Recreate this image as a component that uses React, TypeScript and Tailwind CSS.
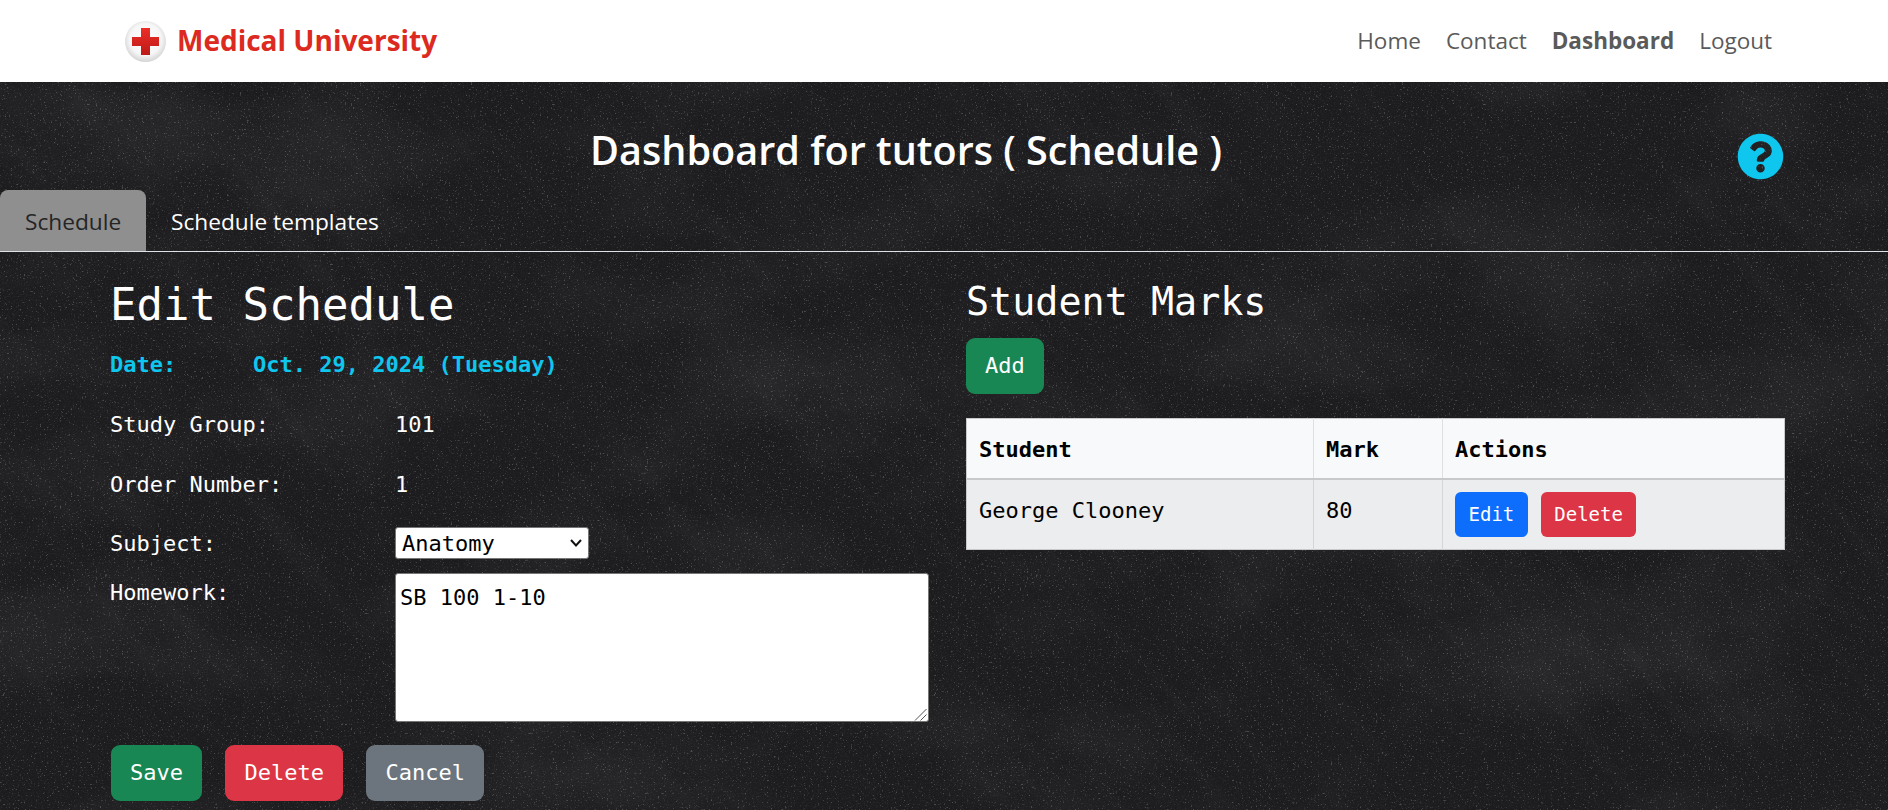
import { FaQuestionCircle } from "react-icons/fa";

const mono = "font-['DejaVu_Sans_Mono','Liberation_Mono',monospace]";
const sans = "font-['Open_Sans','Noto_Sans',sans-serif]";

function ChalkTexture() {
  return (
    <svg className="absolute inset-0 h-full w-full" aria-hidden="true">
      <defs>
        <filter id="patches" x="0" y="0" width="100%" height="100%">
          <feTurbulence type="fractalNoise" baseFrequency="0.005 0.008" numOctaves="4" seed="8" />
          <feColorMatrix values="0 0 0 0 1  0 0 0 0 1  0 0 0 0 1  1.4 0 0 0 -0.6" />
        </filter>
        <filter id="streaks" x="0" y="0" width="100%" height="100%">
          <feTurbulence type="fractalNoise" baseFrequency="0.004 0.05" numOctaves="3" seed="21" />
          <feColorMatrix values="0 0 0 0 1  0 0 0 0 1  0 0 0 0 1  2 0 0 0 -1" />
        </filter>
        <filter id="fine" x="0" y="0" width="100%" height="100%">
          <feTurbulence type="fractalNoise" baseFrequency="0.7" numOctaves="2" seed="11" />
          <feColorMatrix values="0 0 0 0 1  0 0 0 0 1  0 0 0 0 1  3 0 0 0 -1.5" />
        </filter>
        <filter id="grain" x="0" y="0" width="100%" height="100%">
          <feTurbulence type="fractalNoise" baseFrequency="0.55" numOctaves="3" seed="4" />
          <feColorMatrix values="0 0 0 0 1  0 0 0 0 1  0 0 0 0 1  7 0 0 0 -4.6" />
        </filter>
      </defs>
      <rect width="100%" height="100%" filter="url(#patches)" opacity="0.08" />
      <rect x="-400" y="-900" width="3000" height="2600" transform="rotate(50 944 364)" filter="url(#streaks)" opacity="0.02" />
      <rect width="100%" height="100%" filter="url(#fine)" opacity="0.05" />
      <rect width="100%" height="100%" filter="url(#grain)" opacity="0.2" />
    </svg>
  );
}

function Logo() {
  return (
    <svg width="41" height="41" viewBox="0 0 41 41">
      <defs>
        <radialGradient id="ball" cx="50%" cy="45%" r="55%">
          <stop offset="0%" stopColor="#ffffff" />
          <stop offset="70%" stopColor="#f6f6f6" />
          <stop offset="100%" stopColor="#d4d4d4" />
        </radialGradient>
        <linearGradient id="cross" x1="0" y1="0" x2="0" y2="1">
          <stop offset="0%" stopColor="#ee2c27" />
          <stop offset="100%" stopColor="#bb1b17" />
        </linearGradient>
      </defs>
      <circle cx="20.5" cy="20.5" r="20.5" fill="url(#ball)" />
      <path d="M16 7h9v9h9v9h-9v9h-9v-9H7v-9h9z" fill="url(#cross)" />
    </svg>
  );
}

function Btn({ label, color, small }: { label: string; color: string; small?: boolean }) {
  return (
    <button
      className={`${color} ${
        small ? "h-[45px] rounded-[6px] px-[13.5px] text-[19px]" : "h-[56px] rounded-[9px] px-[19px] text-[22px]"
      } text-white`}
    >
      {label}
    </button>
  );
}

export default function App() {
  return (
    <div className={`h-[810px] overflow-hidden bg-white ${sans}`}>
      <header className="flex h-[82px] items-center justify-between pl-[125px] pr-[116px]">
        <div className="flex items-center gap-[11px]">
          <Logo />
          <span className="mb-[2px] text-[28px] font-bold text-[#dc2a20]">Medical University</span>
        </div>
        <nav className="flex gap-[25px] text-[22.5px] text-[#5a5a5a]">
          <a>Home</a>
          <a>Contact</a>
          <a className="font-bold">Dashboard</a>
          <a>Logout</a>
        </nav>
      </header>

      <main className="relative h-[728px] overflow-hidden bg-[#1c1b1e]">
        <ChalkTexture />
        <div className="relative">
          <div className="flex h-[108px] items-center pl-[75px] pr-[104px]">
            <h1 className="flex-1 pt-[30px] text-center text-[39.6px] font-semibold text-white">
              Dashboard for tutors ( Schedule )
            </h1>
            <FaQuestionCircle size={47} className="mt-[40px] text-[#0fc6ee]" />
          </div>

          <div className="flex h-[62px] border-b border-[#dee2e6] text-[22.7px]">
            <div className="flex h-[61px] w-[146px] items-center rounded-t-lg bg-[#8f8f8f] pl-[25px] pt-[3px] text-[#252525]">
              Schedule
            </div>
            <div className="flex h-[61px] items-center pl-[25px] pt-[3px] text-white">Schedule templates</div>
          </div>

          <div className={`flex gap-[37px] pl-[110px] text-[22px] leading-[36px] text-white ${mono}`}>
            <section className="w-[819px]">
              <h2 className="mt-[20px] h-[66px] text-[44px] leading-[66px]">Edit Schedule</h2>
              <div className="mt-[9px] flex h-[36px] font-bold text-[#0fc6ee]">
                <span className="w-[143px]">Date:</span>
                <span>Oct. 29, 2024 (Tuesday)</span>
              </div>
              <div className="mt-[24px] flex h-[36px]">
                <span className="w-[285px]">Study Group:</span>
                <span>101</span>
              </div>
              <div className="mt-[24px] flex h-[36px]">
                <span className="w-[285px]">Order Number:</span>
                <span>1</span>
              </div>
              <div className="mt-[24px] flex h-[32px] items-center">
                <span className="w-[285px] pt-[2px]">Subject:</span>
                <div className="relative">
                  <select className="block h-[32px] w-[194px] appearance-none rounded-[3px] border border-[#767676] bg-white px-[6px] pb-0 pt-[2px] leading-[28px] text-black">
                    <option>Anatomy</option>
                  </select>
                  <svg width="12" height="8" viewBox="0 0 12 8" className="absolute right-[7px] top-[12px]" fill="none" stroke="#111" strokeWidth="2">
                    <path d="M1 1l5 5.500 5-5.500" />
                  </svg>
                </div>
              </div>
              <div className="mt-[14px] flex">
                <span className="w-[285px] pt-[2px]">Homework:</span>
                <div className="relative">
                  <textarea
                    className="block h-[149px] w-[534px] resize-none rounded-[3px] border border-[#767676] bg-white px-[4px] py-[6px] text-black"
                    defaultValue="SB 100 1-10"
                  />
                  <svg width="13" height="13" viewBox="0 0 13 13" className="absolute bottom-[1px] right-[2px]" stroke="#555" strokeWidth="1">
                    <path d="M1 12.500L12.500 1M6.500 12.500l6-6" />
                  </svg>
                </div>
              </div>
              <div className="ml-[1px] mt-[23px] flex gap-[23.5px]">
                <Btn label="Save" color="bg-[#198754]" />
                <Btn label="Delete" color="bg-[#dc3545]" />
                <Btn label="Cancel" color="bg-[#6c757d]" />
              </div>
            </section>

            <section className="w-[819px]">
              <h2 className="mt-[25px] h-[50px] text-[38.4px] leading-[50px]">Student Marks</h2>
              <div className="mt-[11px]">
                <Btn label="Add" color="bg-[#198754]" />
              </div>
              <table className="mt-[24px] w-[819px] table-fixed border-collapse border border-[#c8c9ca] text-black">
                <colgroup>
                  <col className="w-[347px]" />
                  <col className="w-[129px]" />
                  <col />
                </colgroup>
                <thead>
                  <tr className="h-[60px] border-b-2 border-[#c8c9ca] bg-[#f8f9fa] text-left font-bold">
                    <th className="border-r border-[#dfe0e1] px-[12px] pt-[3px]">Student</th>
                    <th className="border-r border-[#dfe0e1] px-[12px] pt-[3px]">Mark</th>
                    <th className="px-[12px] pt-[3px]">Actions</th>
                  </tr>
                </thead>
                <tbody>
                  <tr className="h-[69px] bg-[#ecedee] align-top">
                    <td className="border-r border-[#d5d6d7] px-[12px] pb-[12px] pt-[13px]">George Clooney</td>
                    <td className="border-r border-[#d5d6d7] px-[12px] pb-[12px] pt-[13px]">80</td>
                    <td className="px-[12px] py-[12px]">
                      <div className="flex gap-[13px]">
                        <Btn label="Edit" color="bg-[#0d6efd]" small />
                        <Btn label="Delete" color="bg-[#dc3545]" small />
                      </div>
                    </td>
                  </tr>
                </tbody>
              </table>
            </section>
          </div>
        </div>
      </main>
    </div>
  );
}
